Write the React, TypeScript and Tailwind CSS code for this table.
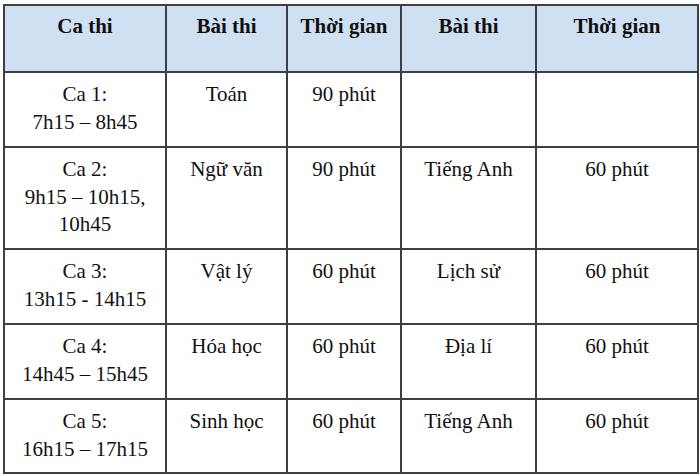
import React from 'react';

type Row = {
    ca: string[];
    bai1: string;
    tg1: string;
    bai2: string;
    tg2: string;
    h: string;
};

const rows: Row[] = [
    { ca: ['Ca 1:', '7h15 – 8h45'], bai1: 'Toán', tg1: '90 phút', bai2: '', tg2: '', h: 'h-[73px]' },
    { ca: ['Ca 2:', '9h15 – 10h15,', '10h45'], bai1: 'Ngữ văn', tg1: '90 phút', bai2: 'Tiếng Anh', tg2: '60 phút', h: 'h-[100px]' },
    { ca: ['Ca 3:', '13h15 - 14h15'], bai1: 'Vật lý', tg1: '60 phút', bai2: 'Lịch sử', tg2: '60 phút', h: 'h-[73px]' },
    { ca: ['Ca 4:', '14h45 – 15h45'], bai1: 'Hóa học', tg1: '60 phút', bai2: 'Địa lí', tg2: '60 phút', h: 'h-[73px]' },
    { ca: ['Ca 5:', '16h15 – 17h15'], bai1: 'Sinh học', tg1: '60 phút', bai2: 'Tiếng Anh', tg2: '60 phút', h: 'h-[72px]' },
];

const headers = ['Ca thi', 'Bài thi', 'Thời gian', 'Bài thi', 'Thời gian'];

const Cell = ({ children, h }: { children?: React.ReactNode; h: string }) => (
    <div className={`bg-white ${h} pt-[8px] text-center text-[21px] leading-[27.5px] text-[#111]`}>
        {children}
    </div>
);

export default function App() {
    return (
        <div className="w-[700px] h-[476px] bg-white pl-[3px] pt-[4px] font-['Liberation_Serif','Times_New_Roman',serif]">
            <div className="inline-grid grid-cols-[160px_119px_112px_133px_160px] gap-[2px] p-[2px] bg-[#3b4047]">
                {/* header */}
                {headers.map((t, i) => (
                    <div key={i} className="bg-[#cfe0f3] h-[65px] pt-[7px] text-center text-[21px] leading-[26px] font-bold text-[#111]">
                        {t}
                    </div>
                ))}

                {rows.map((r, i) => (
                    <React.Fragment key={i}>
                        <Cell h={r.h}>
                            {r.ca.map((line, j) => (
                                <div key={j}>{line}</div>
                            ))}
                        </Cell>
                        <Cell h={r.h}>{r.bai1}</Cell>
                        <Cell h={r.h}>{r.tg1}</Cell>
                        <Cell h={r.h}>{r.bai2}</Cell>
                        <Cell h={r.h}>{r.tg2}</Cell>
                    </React.Fragment>
                ))}
            </div>
        </div>
    );
}
